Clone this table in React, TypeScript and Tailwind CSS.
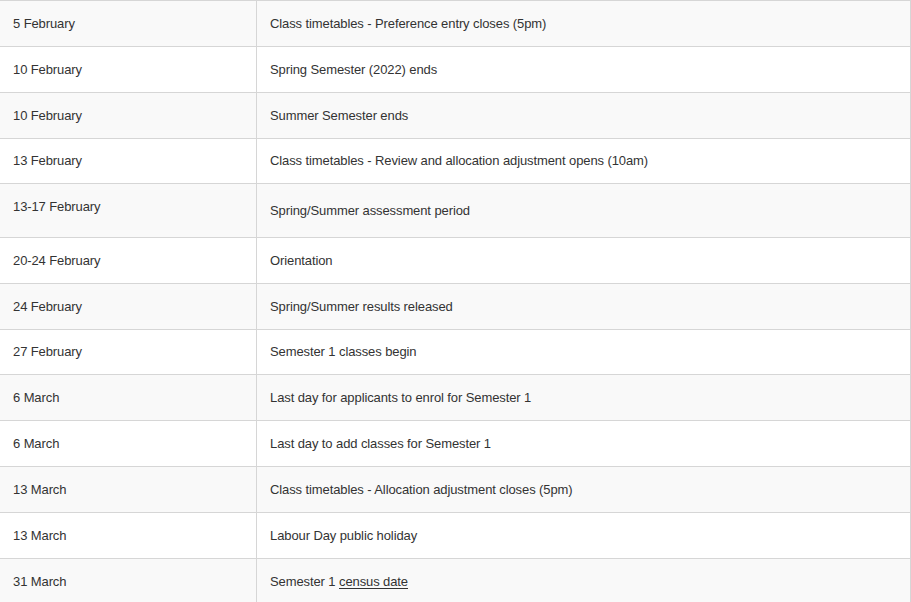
import React from "react";

const rows: { date: string; text: React.ReactNode; h: string; tall?: boolean }[] = [
  { date: "5 February", text: "Class timetables - Preference entry closes (5pm)", h: "h-[46px]" },
  { date: "10 February", text: "Spring Semester (2022) ends", h: "h-[46px]" },
  { date: "10 February", text: "Summer Semester ends", h: "h-[46px]" },
  { date: "13 February", text: "Class timetables - Review and allocation adjustment opens (10am)", h: "h-[45px]" },
  { date: "13-17 February", text: "Spring/Summer assessment period", h: "h-[54px]", tall: true },
  { date: "20-24 February", text: "Orientation", h: "h-[46px]" },
  { date: "24 February", text: "Spring/Summer results released", h: "h-[46px]" },
  { date: "27 February", text: "Semester 1 classes begin", h: "h-[45px]" },
  { date: "6 March", text: "Last day for applicants to enrol for Semester 1", h: "h-[46px]" },
  { date: "6 March", text: "Last day to add classes for Semester 1", h: "h-[46px]" },
  { date: "13 March", text: "Class timetables - Allocation adjustment closes (5pm)", h: "h-[46px]" },
  { date: "13 March", text: "Labour Day public holiday", h: "h-[46px]" },
  {
    date: "31 March",
    text: (
      <>
        Semester 1 <span className="underline underline-offset-2">census date</span>
      </>
    ),
    h: "h-[46px]",
  },
];

export default function App() {
  return (
    <div
      className="w-[911px] h-[602px] overflow-hidden bg-white text-[13px] leading-[16px] tracking-[-0.1px] text-[#333]"
      style={{ fontFamily: '"Liberation Sans", Arial, sans-serif' }}
    >
      <div className="border-t border-r border-[#d6d6d6]">
        {rows.map((r, i) => (
          <div
            key={i}
            className={`flex border-b border-[#d6d6d6] ${i % 2 === 0 ? "bg-[#f9f9f9]" : "bg-white"} ${r.h}`}
          >
            <div
              className={`w-[257px] shrink-0 border-r border-[#d6d6d6] pl-[13px] flex ${
                r.tall ? "items-start pt-[15px]" : "items-center"
              }`}
            >
              <span>{r.date}</span>
            </div>
            <div className="flex-1 pl-[13px] flex items-center">
              <span>{r.text}</span>
            </div>
          </div>
        ))}
      </div>
    </div>
  );
}
